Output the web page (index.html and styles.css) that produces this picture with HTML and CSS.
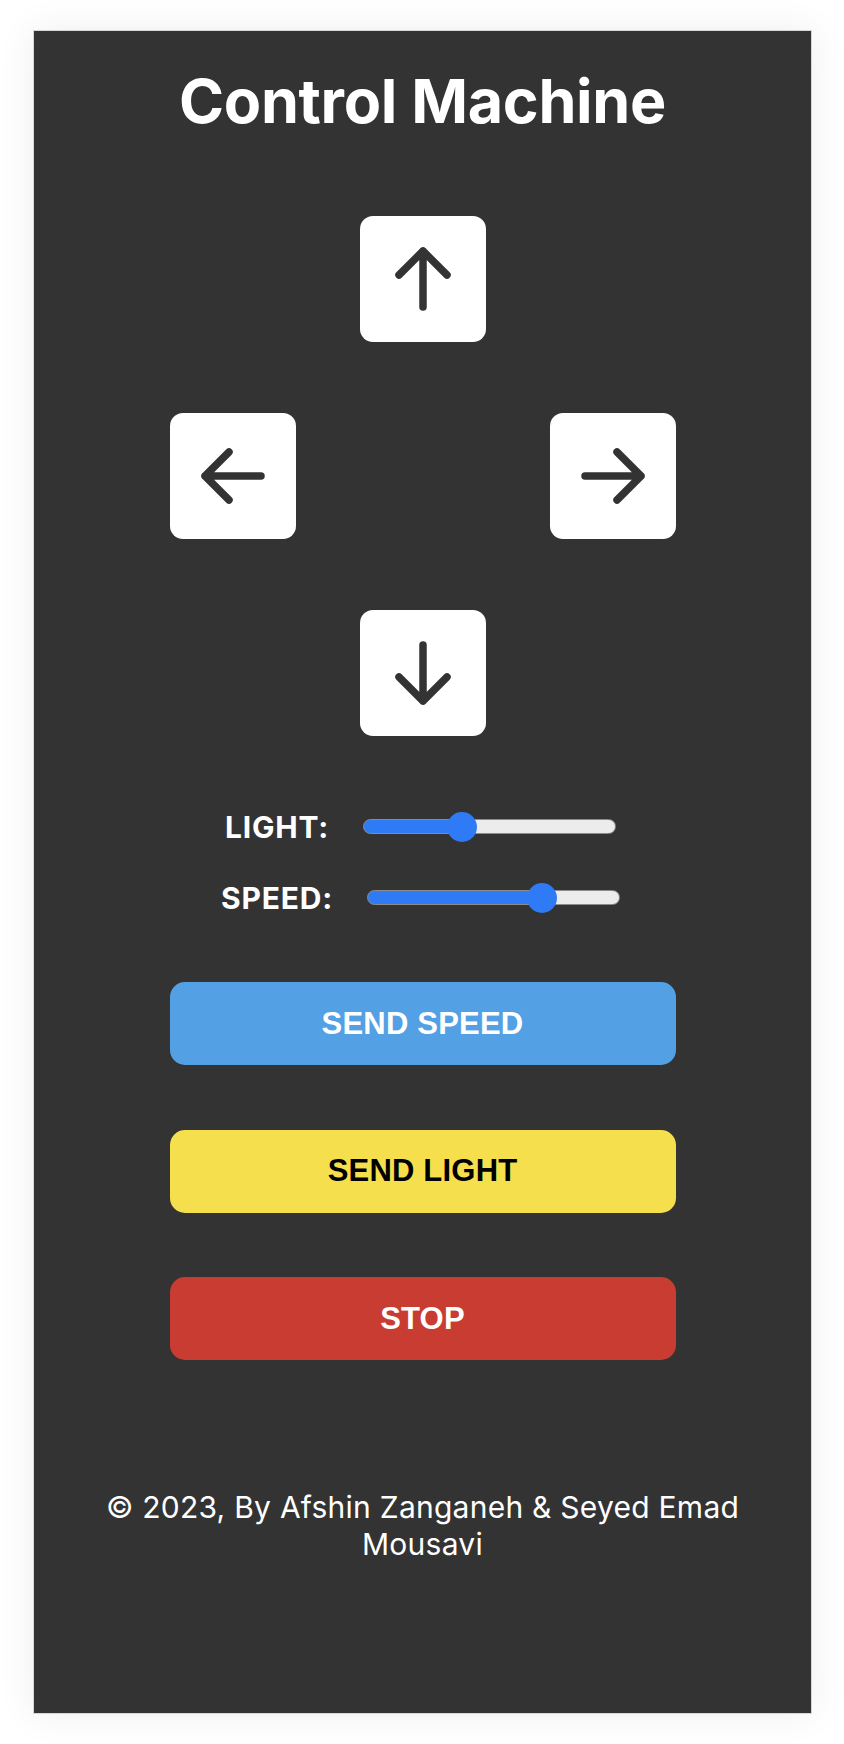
FILE: index.html
```html
<!DOCTYPE html>
<html lang="en">
<head>
<meta charset="utf-8">
<title>Control Machine</title>
<link rel="stylesheet" href="styles.css">
</head>
<body>
<main class="panel">
  <h1 class="title">Control Machine</h1>

  <div class="dpad">
    <button class="key key-up" aria-label="Up">
      <svg class="arrow" viewBox="0 0 70 70"><path d="M35 63V7M11 31L35 7L59 31"/></svg>
    </button>
    <button class="key key-left" aria-label="Left">
      <svg class="arrow" viewBox="0 0 70 70"><path d="M63 35H7M31 11L7 35L31 59"/></svg>
    </button>
    <button class="key key-right" aria-label="Right">
      <svg class="arrow" viewBox="0 0 70 70"><path d="M7 35H63M39 11L63 35L39 59"/></svg>
    </button>
    <button class="key key-down" aria-label="Down">
      <svg class="arrow" viewBox="0 0 70 70"><path d="M35 7V63M11 39L35 63L59 39"/></svg>
    </button>
  </div>

  <div class="sliders">
    <div class="slider-row">
      <label class="slider-label" for="light">LIGHT:</label>
      <input id="light" class="range" type="range" min="0" max="255" value="96" style="--fill: 98px">
    </div>
    <div class="slider-row">
      <label class="slider-label" for="speed">SPEED:</label>
      <input id="speed" class="range" type="range" min="0" max="255" value="184" style="--fill: 175px">
    </div>
  </div>

  <div class="actions">
    <button class="action action-speed">SEND SPEED</button>
    <button class="action action-light">SEND LIGHT</button>
    <button class="action action-stop">STOP</button>
  </div>

  <footer class="credit">© 2023, By Afshin Zanganeh &amp; Seyed Emad Mousavi</footer>
</main>
</body>
</html>
```

FILE: styles.css
```css
html, body {
  margin: 0;
  padding: 0;
  background: #ffffff;
}

body {
  font-family: Inter, "Liberation Sans", Arial, sans-serif;
}

.panel {
  box-sizing: border-box;
  width: 779px;
  min-height: 1684px;
  margin: 30px 32px 30px 33px;
  padding: 33px 0 40px;
  background: #333333;
  border: 1px solid #d6d6d6;
  box-shadow: 0 0 36px rgba(0, 0, 0, 0.07);
  display: flex;
  flex-direction: column;
  align-items: center;
}

.title {
  margin: 0;
  font-size: 61px;
  line-height: 74px;
  font-weight: 700;
  color: #ffffff;
  text-align: center;
  letter-spacing: -0.3px;
}

.dpad {
  margin-top: 78px;
  display: grid;
  grid-template-columns: repeat(3, 126px);
  grid-template-rows: repeat(3, 126px);
  column-gap: 64px;
  row-gap: 71px;
}

.key {
  width: 126px;
  height: 126px;
  padding: 0;
  border: none;
  border-radius: 13px;
  background: #ffffff;
  display: flex;
  align-items: center;
  justify-content: center;
  cursor: pointer;
}

.key-up { grid-column: 2; grid-row: 1; }
.key-left { grid-column: 1; grid-row: 2; }
.key-right { grid-column: 3; grid-row: 2; }
.key-down { grid-column: 2; grid-row: 3; }

.arrow {
  width: 70px;
  height: 70px;
  fill: none;
  stroke: #333333;
  stroke-width: 7.5;
  stroke-linecap: round;
  stroke-linejoin: round;
}

.sliders {
  margin-top: 75.5px;
  display: flex;
  flex-direction: column;
  gap: 41px;
}

.slider-row {
  height: 30px;
  display: flex;
  align-items: center;
  justify-content: center;
  gap: 34px;
  padding-right: 4px;
}

.slider-label {
  font-size: 30px;
  line-height: 30px;
  font-weight: 700;
  letter-spacing: 0.8px;
  color: #ffffff;
}

.range {
  -webkit-appearance: none;
  appearance: none;
  width: 253px;
  height: 30px;
  margin: 0;
  padding: 0;
  background: transparent;
}

.range::-webkit-slider-runnable-track {
  box-sizing: border-box;
  height: 15px;
  border-radius: 8px;
  border: 1px solid #8c8c8c;
  background: linear-gradient(to right, #2f7bf5 var(--fill), #ececec var(--fill));
}

.range::-webkit-slider-thumb {
  -webkit-appearance: none;
  appearance: none;
  width: 30px;
  height: 30px;
  margin-top: -8.5px;
  border: none;
  border-radius: 50%;
  background: #2f7bf5;
}

.actions {
  margin-top: 69.5px;
  display: flex;
  flex-direction: column;
  gap: 64.5px;
}

.action {
  width: 506px;
  height: 83px;
  border: none;
  border-radius: 15px;
  font-family: "Liberation Sans", Arial, sans-serif;
  font-size: 31px;
  font-weight: 700;
  letter-spacing: 0.2px;
  cursor: pointer;
}

.action-speed { background: #53a0e4; color: #ffffff; }
.action-light { background: #f5df4c; color: #000000; }
.action-stop { background: #c83c32; color: #ffffff; }

.credit {
  margin-top: 128.5px;
  padding: 0 40px;
  font-size: 30px;
  line-height: 37.7px;
  font-weight: 400;
  letter-spacing: 0.25px;
  color: #ffffff;
  text-align: center;
}
```
